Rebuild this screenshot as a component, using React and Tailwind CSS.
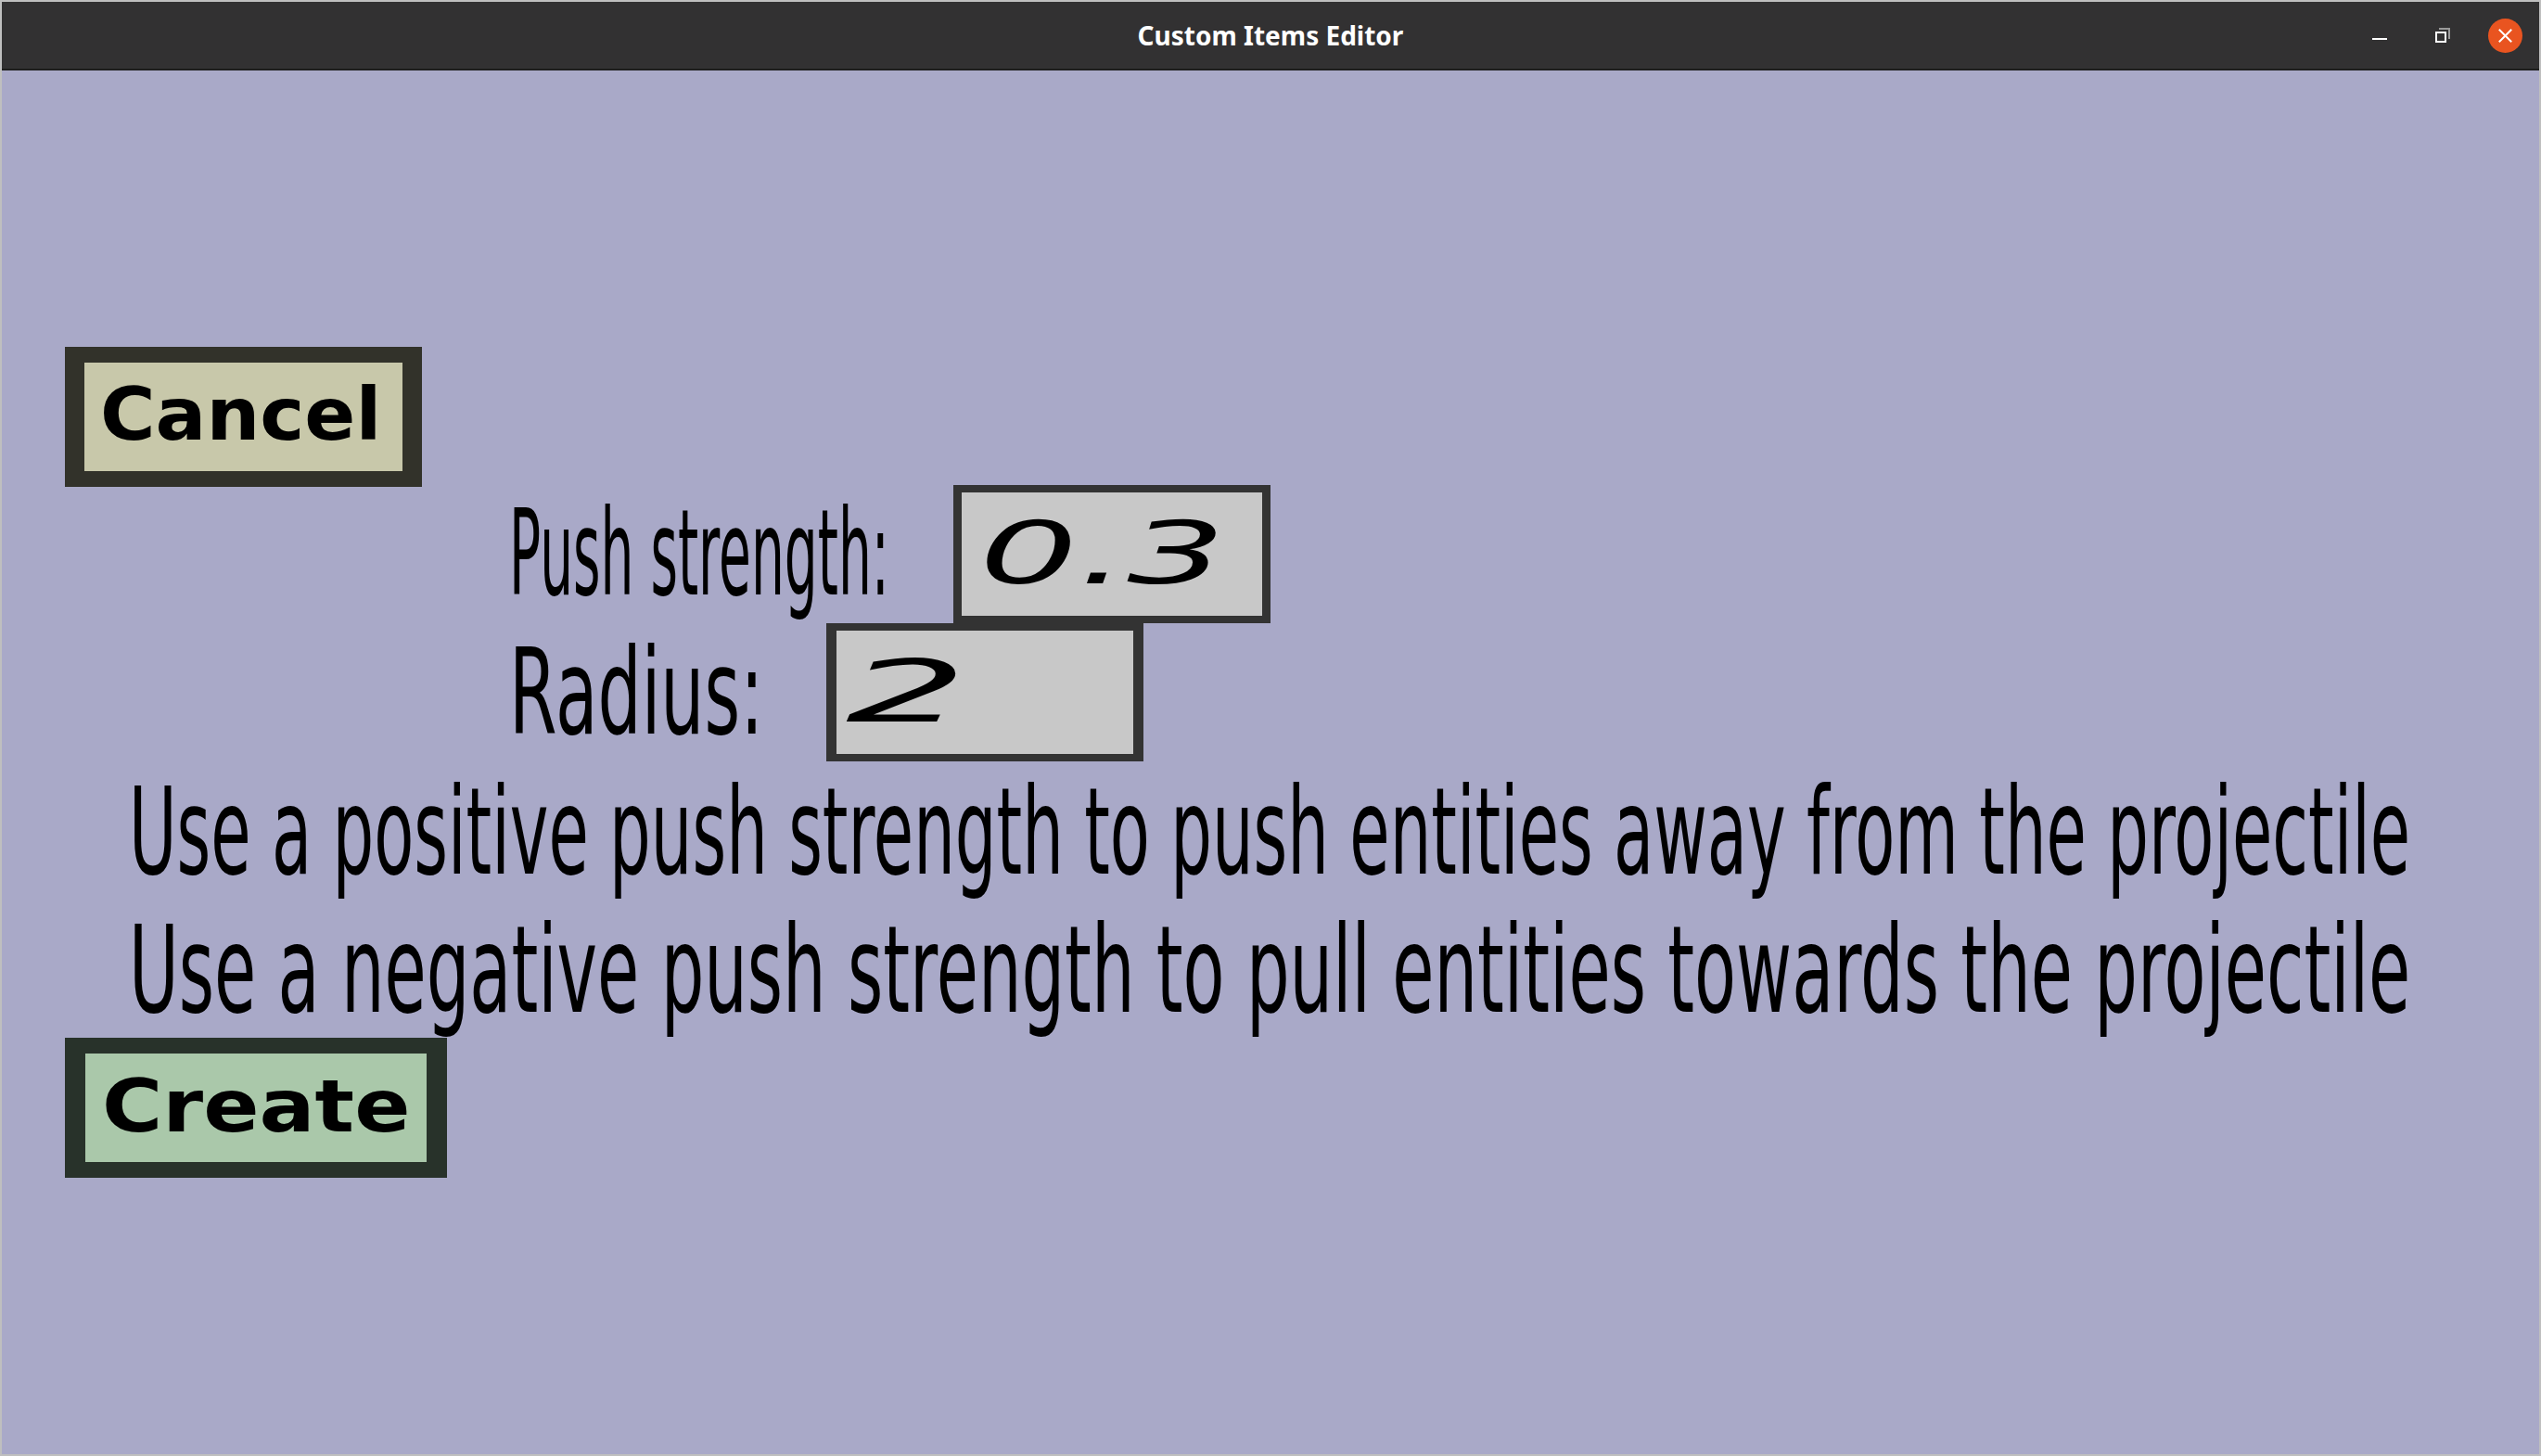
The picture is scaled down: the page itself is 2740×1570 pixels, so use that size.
import React, { useLayoutEffect, useRef, useState } from "react";

function Fit({ target, className = "", children }) {
  const ref = useRef(null);
  const [scale, setScale] = useState(1);
  useLayoutEffect(() => {
    const m = () => {
      const el = ref.current;
      if (!el) return;
      const n = el.offsetWidth;
      if (n > 0) setScale(target / n);
    };
    m();
    if (document.fonts && document.fonts.ready) document.fonts.ready.then(m);
  }, [target]);
  return (
    <span
      ref={ref}
      className={`block w-max whitespace-nowrap origin-left leading-none ${className}`}
      style={{ transform: `scaleX(${scale})` }}
    >
      {children}
    </span>
  );
}

function TitleBar() {
  return (
    <div className="h-[74px] shrink-0 bg-[#323132] border-b-2 border-[#1e1e1e] grid grid-cols-[1fr_auto_1fr] items-center">
      <div />
      <div className="text-white font-bold text-[28px] leading-none font-['Noto_Sans',sans-serif]">
        Custom Items Editor
      </div>
      <div className="flex justify-end items-center pr-[18px]">
        <div className="w-[16px] h-[2px] bg-white mt-[8px]" />
        <svg className="ml-[52px]" width="16" height="16" viewBox="0 0 16 16">
          <path d="M4 1 H15 V12" fill="none" stroke="#9a9a9a" strokeWidth="2" />
          <rect x="1" y="5" width="10" height="10" fill="#323132" stroke="#ffffff" strokeWidth="2" />
        </svg>
        <div className="ml-[41px] w-[37px] h-[37px] rounded-full bg-[#e95420] flex items-center justify-center">
          <svg width="15" height="15" viewBox="0 0 15 15">
            <path d="M1.5 1.5 L13.5 13.5 M13.5 1.5 L1.5 13.5" stroke="#ffffff" strokeWidth="2" strokeLinecap="square" />
          </svg>
        </div>
      </div>
    </div>
  );
}

export default function App() {
  return (
    <div className="h-[1570px] w-[2740px] border-2 border-[#bfbfbf] bg-[#a9a9c8] flex flex-col overflow-hidden">
      <TitleBar />
      <div className="flex flex-col pl-[68px] pt-[298px] text-black leading-none font-['DejaVu_Sans',sans-serif]">
        <div className="w-[385px] h-[151px] border-x-[21px] border-y-[17px] border-[#32322a] bg-[#c8c8aa] pl-[17px] pt-[17px]">
          <Fit target={303} className="text-[78px] font-bold">Cancel</Fit>
        </div>

        <div className="-mt-[2px] flex h-[149px]">
          <div className="ml-[479px] w-[479px] pt-[10px]">
            <Fit target={410} className="text-[128px]">Push strength:</Fit>
          </div>
          <div className="w-[342px] h-[149px] border-x-[9px] border-y-[8px] border-[#333333] bg-[#c8c8c8] pl-[19px] pt-[21px]">
            <Fit target={265} className="text-[92px] italic">0.3</Fit>
          </div>
        </div>

        <div className="flex h-[149px]">
          <div className="ml-[479px] w-[342px] pt-[11px]">
            <Fit target={274} className="text-[128px]">Radius:</Fit>
          </div>
          <div className="w-[342px] h-[149px] border-x-[11px] border-y-[8px] border-[#333333] bg-[#c8c8c8] pl-[10px] pt-[21px]">
            <Fit target={132} className="text-[92px] italic">2</Fit>
          </div>
        </div>

        <div className="h-[149px] pl-[69px] pt-[11px]">
          <Fit target={2460} className="text-[130px]">
            Use a positive push strength to push entities away from the projectile
          </Fit>
        </div>

        <div className="h-[149px] pl-[69px] pt-[11px]">
          <Fit target={2460} className="text-[130px]">
            Use a negative push strength to pull entities towards the projectile
          </Fit>
        </div>

        <div className="w-[412px] h-[151px] border-x-[22px] border-y-[17px] border-[#28322a] bg-[#aac8aa] pl-[18px] pt-[18px]">
          <Fit target={332} className="text-[78px] font-bold">Create</Fit>
        </div>
      </div>
    </div>
  );
}
